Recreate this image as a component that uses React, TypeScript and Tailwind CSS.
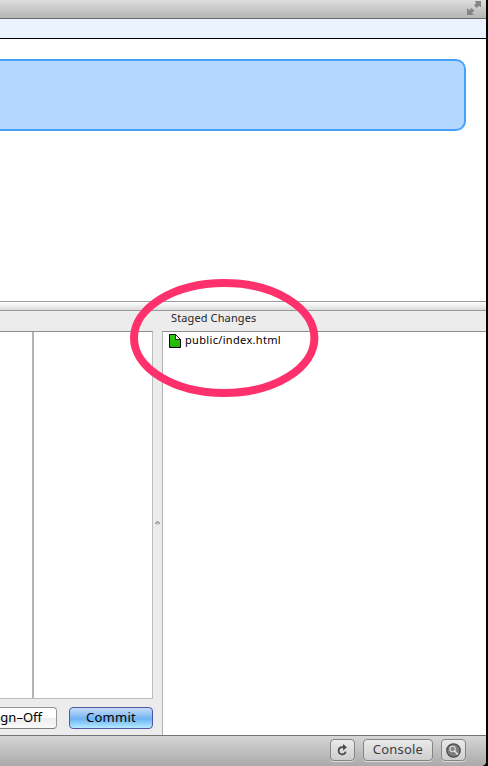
import React from "react";

function ExpandIcon() {
  return (
    <svg width="15" height="16" viewBox="0 0 15 16" fill="#858585" className="block">
      <path d="M7.500 1H14v6.500L12 5.700 9.700 8 7 5.300 9.300 3z" />
      <path d="M7 15H0V8l2.200 2.200L4.500 8 7.200 10.700 4.900 12.900z" />
    </svg>
  );
}

function FileIcon() {
  return (
    <svg width="12" height="14" viewBox="0 0 12 14" className="block shrink-0">
      <defs>
        <linearGradient id="file" x1="0" y1="0" x2="0" y2="1">
          <stop offset="0" stopColor="#2fd10c" />
          <stop offset="1" stopColor="#1fae04" />
        </linearGradient>
      </defs>
      <path d="M.5.5h6l5 5v8H.5z" fill="url(#file)" stroke="#000" />
      <path d="M6.500.5v5h5z" fill="#fff" stroke="#000" strokeWidth=".8" />
    </svg>
  );
}

function ReloadIcon() {
  return (
    <svg width="11" height="12" viewBox="0 0 11 12" className="block">
      <path d="M7 3.200H5A3.600 3.600 0 1 0 8.700 7.600" fill="none" stroke="#4a4a4a" strokeWidth="1.700" />
      <path d="M6 0l4 3.300-4 3.200z" fill="#4a4a4a" />
    </svg>
  );
}

function SearchIcon() {
  return (
    <svg width="15" height="15" viewBox="0 0 15 15" className="block">
      <circle cx="7.500" cy="7.500" r="6.700" fill="#7c7c7c" stroke="#4c4c4c" strokeWidth="1.300" />
      <circle cx="6.600" cy="6" r="2.700" fill="#858585" stroke="#dcdcdc" strokeWidth="1.100" />
      <path d="M8.600 8l3.300 3.600" stroke="#dcdcdc" strokeWidth="1.800" />
    </svg>
  );
}

const footerButton =
  "flex h-[22px] items-center justify-center rounded-[4px] border border-[#858585] bg-linear-to-b from-[#eaeaea] to-[#cecece] shadow-[0_1px_0_#dadada]";

export default function App() {
  return (
    <div className="relative h-[766px] w-[488px] overflow-hidden bg-black pr-[2px] font-['Noto_Sans',sans-serif] text-black">
      <div className="flex h-full flex-col overflow-hidden rounded-br-[5px] bg-white">
        <header className="flex h-[19px] shrink-0 justify-end border-b border-[#6b6b6b] bg-linear-to-b from-[#dedede] to-[#b5b5b5] pr-[4px]">
          <ExpandIcon />
        </header>
        <div className="h-[20px] shrink-0 border-b border-black bg-[#ebf3ff]" />
        <section className="h-[262px] shrink-0 pt-[20px] pr-[20px]">
          <div className="h-[72px] rounded-r-[10px] border-y-2 border-r-2 border-[#46a0fc] bg-[#b3d7ff]" />
        </section>
        <div className="h-[10px] shrink-0 border-y border-[#9b9b9b] bg-linear-to-b from-white to-[#dcdcdc]" />

        <main className="flex h-[424px] shrink-0">
          <section className="flex w-[153px] flex-col bg-[#ececec]">
            <div className="h-[20px]" />
            <div className="flex h-[368px] border-y border-r border-t-[#8e8e8e] border-r-[#bdbdbd] border-b-[#bdbdbd] bg-white">
              <div className="w-[34px] border-r-2 border-[#b4b4b4]" />
            </div>
            <div className="flex gap-[12px] pt-[8px]">
              <button className="flex h-[22px] w-[57px] items-center justify-end rounded-r-[4px] border-y border-r border-[#969696] border-b-[#7d7d7d] bg-linear-to-b from-white from-50% via-[#ededed] via-51% to-[#fafafa] pr-[14px] pb-px text-[13px] whitespace-nowrap">
                gn–Off
              </button>
              <button className="flex h-[22px] w-[84px] shrink-0 items-center justify-center rounded-[4px] border border-[#5157a5] bg-linear-to-b from-[#c5ddf7] via-[#6fb3f3] via-55% to-[#b6ecff] pb-px text-[13px] tracking-[0.3px]">
                Commit
              </button>
            </div>
          </section>
          <div className="flex w-[9px] items-center justify-center bg-[#ececec]">
            <svg width="5" height="5" viewBox="0 0 5 5" className="block">
              <circle cx="2.500" cy="2.500" r="2" fill="#d8d8d8" />
              <path d="M.5 2.800a2 2 0 0 1 4 0" fill="#bbb" stroke="#8b8b8b" />
            </svg>
          </div>
          <section className="flex flex-1 flex-col">
            <div className="h-[20px] bg-[#ececec] pl-[9px] text-[11px] leading-[13px] tracking-[0.12px] text-[#252525]">Staged Changes</div>
            <div className="flex-1 border-t border-l border-t-[#8e8e8e] border-l-[#b2b2b2] bg-white pt-[2px] pl-[6px]">
              <div className="flex items-start gap-[4px]">
                <FileIcon />
                <span className="text-[11px] leading-[12px] tracking-[0.33px]">public/index.html</span>
              </div>
            </div>
          </section>
        </main>

        <footer className="flex flex-1 items-start justify-end gap-[8px] border-t border-[#737373] bg-linear-to-b from-[#d6d6d6] to-[#aaa] pt-[3px] pr-[20px]">
          <button className={`${footerButton} w-[25px]`}><ReloadIcon /></button>
          <button className={`${footerButton} w-[70px] text-[13px] tracking-[0.2px] text-[#3c3c3c]`}>Console</button>
          <button className={`${footerButton} w-[25px]`}><SearchIcon /></button>
        </footer>
      </div>
      <svg width="190" height="120" viewBox="0 0 190 120" className="pointer-events-none absolute top-[278px] left-[129px]">
        <ellipse cx="95.200" cy="60" rx="90.200" ry="55" fill="none" stroke="#ff316d" strokeWidth="8" />
      </svg>
    </div>
  );
}
